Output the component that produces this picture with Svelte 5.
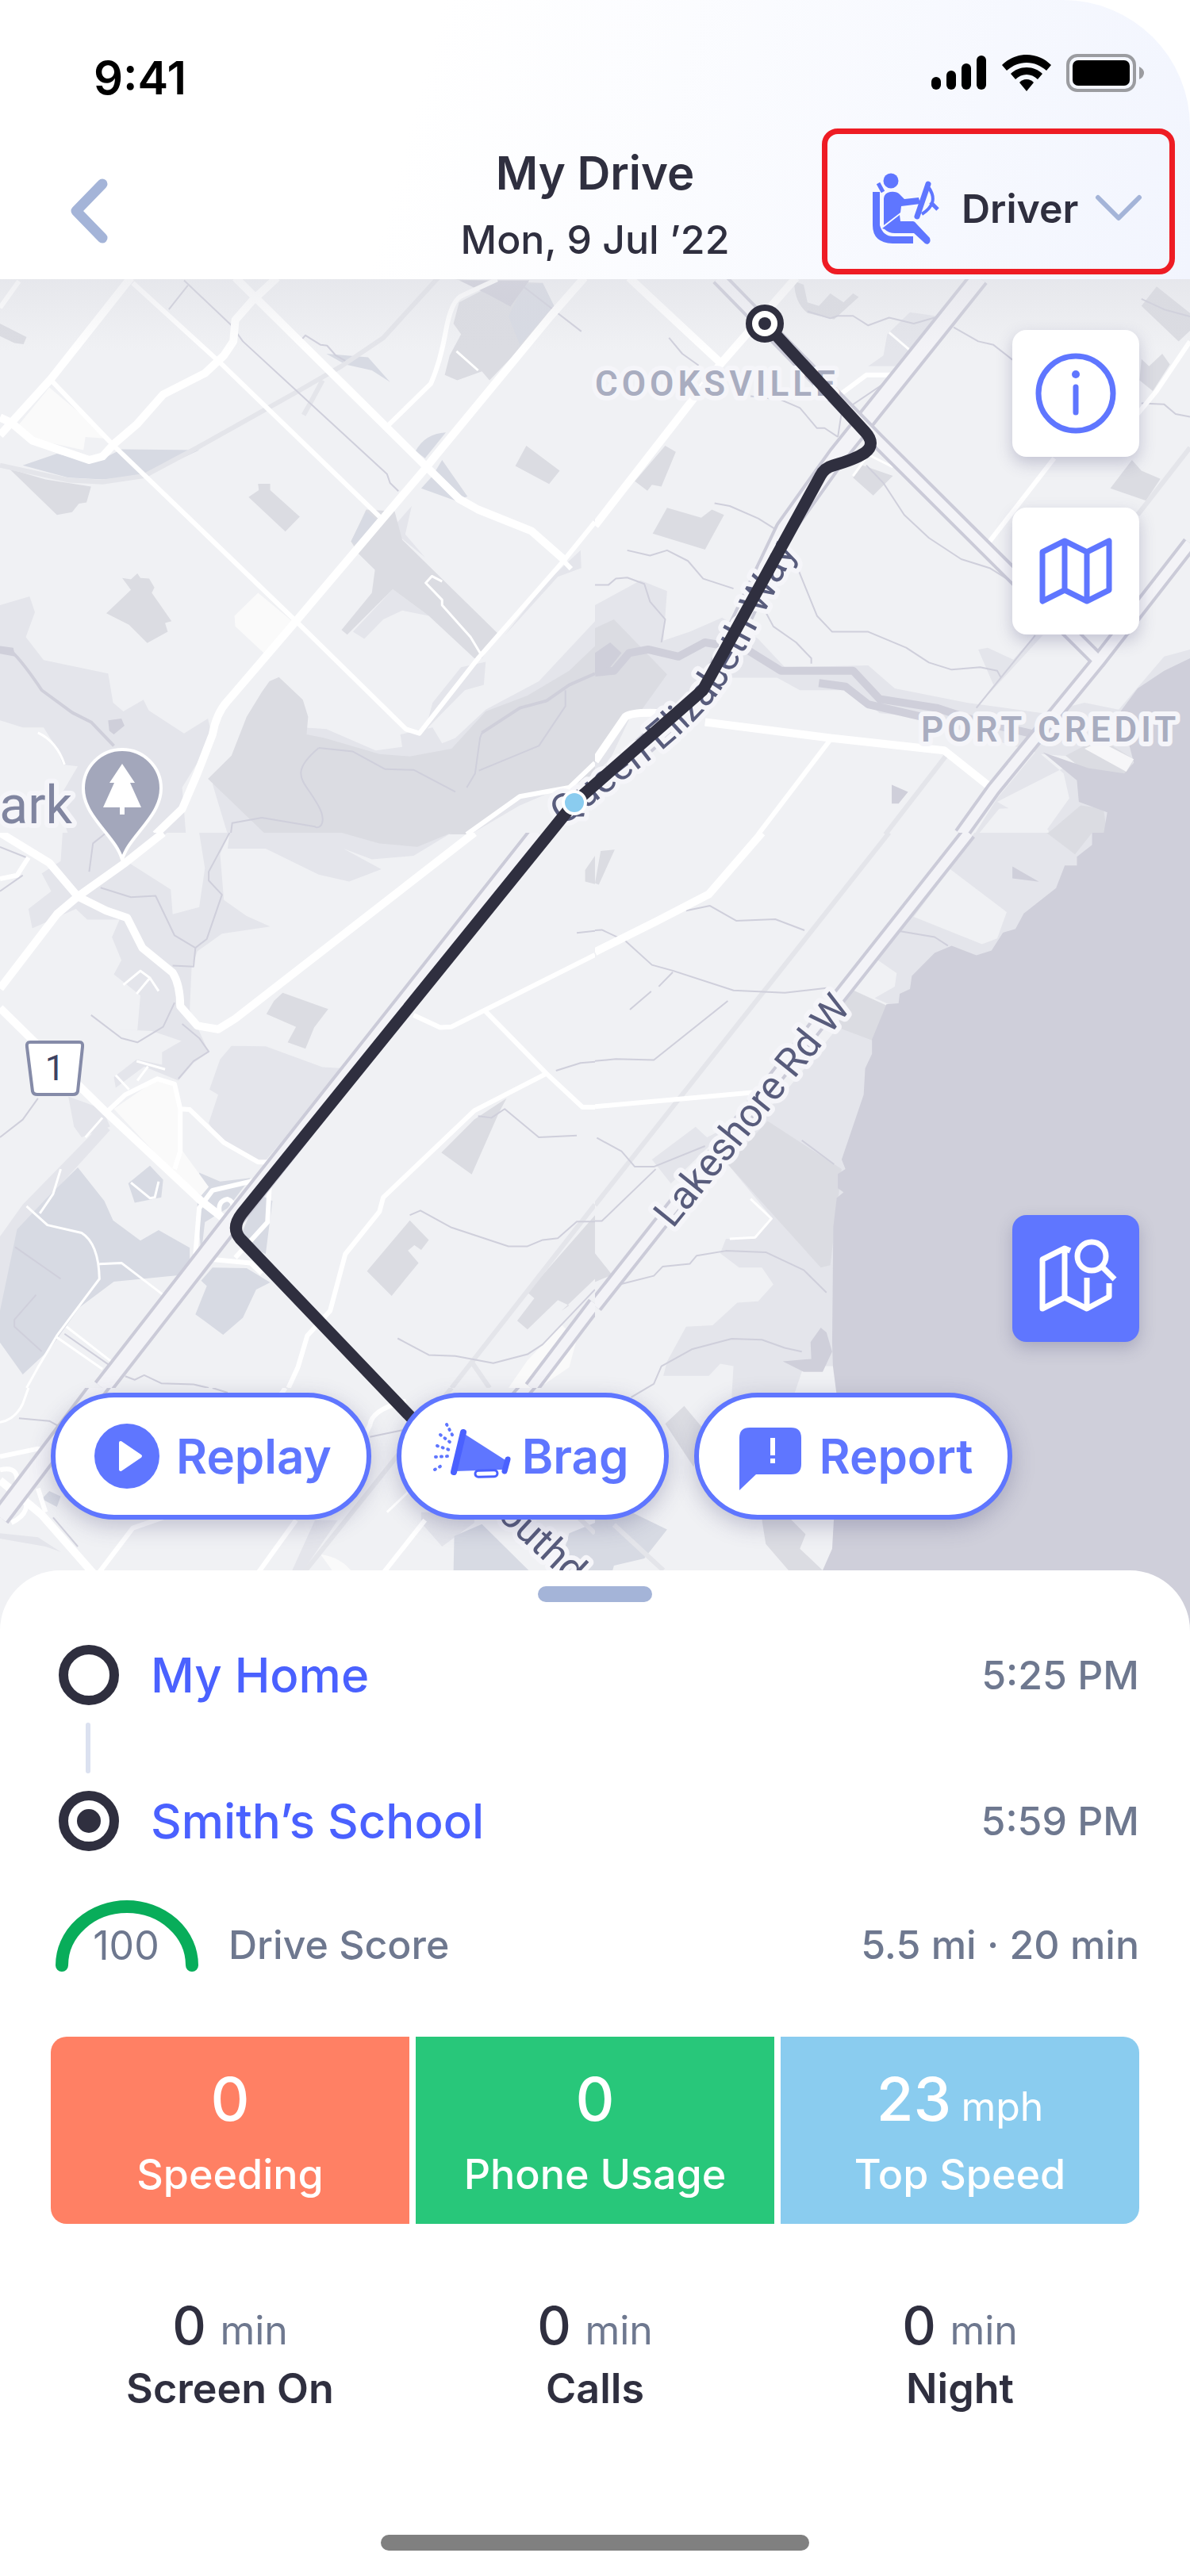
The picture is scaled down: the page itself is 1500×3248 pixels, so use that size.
<script>
  let role = 'Driver';

  const stops = [
    { name: 'My Home', time: '5:25 PM', end: false },
    { name: 'Smith’s School', time: '5:59 PM', end: true }
  ];

  const scores = [
    { value: '0', unit: '', label: 'Speeding', tone: 'coral' },
    { value: '0', unit: '', label: 'Phone Usage', tone: 'green' },
    { value: '23', unit: 'mph', label: 'Top Speed', tone: 'sky' }
  ];

  const stats = [
    { value: '0', unit: 'min', label: 'Screen On' },
    { value: '0', unit: 'min', label: 'Calls' },
    { value: '0', unit: 'min', label: 'Night' }
  ];

  // Map tiles: every layer is one path, drawn bottom to top
  const tiles = [
    {
      x: 0, y: 350, w: 750, h: 702, box: '0 0 1568 1572',
      layers: [
        ['light', 'M0 925L78 900L92 945L68 1015L115 1080L285 1118L298 1200L325 1225L378 1192L392 1222L485 1287L548 1245L560 1300L480 1440L490 1572H0Z M600 1572L560 1430L700 1330L800 1270L860 1275L990 1335L1060 1325L1055 1290L1140 1270L1165 1315L1200 1300L1280 1220L1420 1140L1568 970V1400L1370 1490L1240 1572Z M1215 1100L1280 1085L1275 1150L1225 1165L1165 1230L1120 1280L1140 1200Z M1085 645L1068 725L1120 790L1040 720V700Z M1530 770L1532 820L1470 845L1330 1010L1440 860Z M1060 940L1010 965L960 1020L930 1000L1035 880L1130 955Z'],
        ['land', 'M0 1250L60 1270H115L150 1330L165 1375L205 1380L150 1480L180 1572H0Z'],
        ['dark', 'M25 540L120 570L240 590L228 635L208 638L190 662L150 670Z M655 620L682 600L680 582H712V600L790 675L752 717Z M1387 475L1475 545L1447 583L1358 532Z M322 848L345 852L362 835L370 848L393 850L407 875L400 890L452 970L435 975L442 1000L388 1032L340 980L280 948L345 882Z M965 655L1040 660L1060 740L1312 1005L1270 1075H1250L1130 955L1035 880L915 1008L900 995L980 890L988 825L945 780L925 745Z M0 130L70 168L62 188L38 185L0 165Z M1200 5L1430 15L1460 80L1380 190L1290 290L1270 265L1205 290L1172 275L1185 220L1215 160L1195 130L1210 70L1290 25Z M735 1128L798 1192L812 1240L808 1290L855 1300L1000 1345L1080 1352L1190 1330L1280 1225L1390 1180L1500 1110L1568 1040V1400L1500 1440L1370 1470L1240 1572H700L548 1415L610 1350L650 1240L690 1170L710 1140Z'],
        ['blue', 'M60 530L150 497L235 520L270 512L320 485L525 487L380 560L270 570L180 565Z M1095 490Q1120 440 1175 437L1120 510Z M1140 560L1165 515L1232 618L1200 630L1110 595Z M860 215L970 225L1028 295L980 262L910 245Z M965 660L925 745L940 755L1000 690Z M1380 20L1430 15L1460 80L1370 190L1340 110Z'],
        ['water', 'M285 1250L320 1245L328 1265L300 1290L288 1280Z M0 1040L35 1045L40 1070L0 1062Z M1210 8H1395L1345 82L1290 50Z'],
        ['pale', 'M130 310L290 455L225 450L220 487L85 455L50 415Z M680 890L770 970L695 1060L620 985L618 955Z'],
        ['rail', 'M1155 0L1010 170L900 250L790 318L520 480L380 560L270 577L180 572L0 530 M800 388L820 350L850 290'],
        ['stream', 'M30 1055Q60 1085 110 1165L190 1228L240 1255L300 1322 M1568 1118L1500 1150L1440 1195L1370 1215L1270 1285'],
        ['trail', 'M485 8L610 135L640 180L1020 555L1028 580L1050 603 M445 90L495 22 M795 175L805 163L845 190L862 192L885 220L910 235 M1320 20L1375 22L1532 152 M840 1328C760 1400 800 1420 830 1475C870 1540 840 1560 830 1550L690 1525L612 1540L608 1572 M840 1328L930 1338L1015 1388L1090 1390L1200 1452 M1230 1440L1252 1400L1265 1300L1270 1285 M1490 1165V1210L1420 1322L1262 1392'],
        ['lane', 'M1268 1065L1240 1015L1165 925V910L1122 862L1138 843L1165 858 M1203 208L1260 262 M100 1285Q150 1310 170 1375'],
        ['street', 'M350 15L575 235L1000 675 M135 290L300 475L780 970L1070 1275L1105 1287L1260 1075L1485 800L1568 690 M1025 415L1135 300Q1160 240 1175 150Q1190 60 1220 50L1310 5 M50 10L0 85 M1230 1572L1370 1465L1500 1440L1568 1370 M1485 800L1505 822'],
        ['road', 'M345 0L135 285L0 445 M0 395L30 410L85 460L235 515L270 505L300 470L360 415L430 330L540 270L590 220L615 180L620 120L665 65L730 0 M620 0L1120 530L1210 625L1260 655L1400 715L1485 795 M1540 0L1450 110L1150 500L1120 540L780 970L600 1195Q570 1230 560 1290L520 1400L480 1500L410 1572']
      ]
    },
    {
      x: 750, y: 350, w: 750, h: 702, box: '0 0 1568 1572',
      layers: [
        ['light', 'M0 925L120 855L190 885L180 1025L250 1000L335 960L430 1020L500 1100L720 1095L790 1160L980 1200L1180 1230L1290 1200L1380 1220L1500 1070L1568 1050V1572H1000L1060 1470L1160 1340L1000 1290L850 1240L750 1230L680 1165L540 1165L480 1130L330 1130L200 1225H100L40 1360L0 1400Z M770 160L830 98L908 110L800 250H720L760 220Z M1105 1075L1160 1010H1180L1000 1220Z M1010 1050L1035 1045L1105 1080L1050 1150Z'],
        ['land', 'M1065 1500L1105 1497L1195 1560V1572H1010Z M1290 1355L1175 1345L1235 1400L1250 1470L1190 1560L1060 1480Z'],
        ['dark', 'M0 990L50 965L190 1120L120 1225L80 1240L0 1350Z M152 723L190 650L280 678L308 655L340 670L290 768Z M105 575L185 475L213 492L175 590L150 585L138 602Z M1415 515L1440 545L1490 568L1452 630L1358 595Z M680 565L705 530L785 560L733 615Z M1440 80L1480 25L1568 100V150L1538 180Z M1440 230L1460 250L1495 215L1515 245L1470 320L1435 290Z M525 10L550 20L560 70L590 80L620 45L655 70L680 45L695 55L630 118L560 100Q525 70 525 10Z M1240 1350L1330 1300L1420 1360L1400 1420L1300 1400Z M1280 1490L1340 1500L1350 1572H1190Z'],
        ['water', 'M1568 1075L1500 1110L1430 1160L1385 1225L1420 1370L1395 1400L1300 1385L1180 1340L1270 1420L1275 1480L1350 1510L1340 1572H1568Z M782 1432L825 1452L800 1485H782Z M0 1060L40 1030L70 1060L40 1100L0 1120Z'],
        ['white', 'M1330 1310L1420 1360L1400 1395L1290 1330Z'],
        ['rail', 'M925 1350L765 1572 M1568 480L1430 670'],
        ['river', 'M0 1115L50 1110L90 1060L140 1050L220 1070L290 1030L400 1050L490 1110H680L750 1190L900 1215L1000 1250L1160 1290 M590 1145L660 1155L720 1205L860 1240'],
        ['trail', 'M195 170L230 215L273 248 M560 95L620 115L640 108H680L720 135L775 113L840 130L895 113 M945 140L1010 180L1050 190L1100 232 M315 637L355 645L430 680L475 710 M85 770L145 785L190 770L245 800L285 850L365 878 M0 868H35L55 850L85 847L130 865L145 915L185 965L175 1030 M445 935L470 985L530 1030L570 1075V1090 M530 810L585 955L625 1000H720L820 1045L880 1087L940 1107L1015 1100L1060 1110L1070 1130 M410 335L490 345L540 368L585 425H605L640 450 M715 530L760 580L815 670L880 735L965 795L1040 820L1085 850 M1440 355L1500 358L1530 385L1568 393 M1160 1010L1005 1215 M640 450L650 380L760 300 M1440 60L1500 90L1568 110'],
        ['lane', 'M775 155L830 205 M680 560L720 500L785 535'],
        ['street', 'M640 335L715 275H780 M1210 510L1040 745 M1568 180L1480 320L1430 385 M620 1305L430 1572'],
        ['road', 'M90 0L330 240 M530 0L330 245L0 700 M290 1255L620 1300L920 1335L1055 1450 M0 1365L80 1240Q100 1225 180 1230L240 1240'],
        ['case wide', 'M1013 0L640 500L500 710L300 1160L0 1445'],
        ['fill wide', 'M1013 0L640 500L500 710L300 1160L0 1445'],
        ['case', 'M325 0L740 455L1330 1085 M1568 750L1325 1085L1050 1445L965 1572'],
        ['fill', 'M325 0L740 455L1330 1085 M1568 750L1325 1085L1050 1445L965 1572']
      ]
    },
    {
      x: 0, y: 1050, w: 750, h: 700, box: '0 0 1568 1568',
      layers: [
        ['light', 'M165 0H605L580 60L590 190L650 235L712 265L585 285L520 335L505 380L500 500L550 620L510 650L470 700L380 660L305 720L300 690L360 640L427 655V620L478 588L400 560L300 555L362 558L370 460L300 400L320 360L295 295L315 245H230L200 215L85 270L75 215L135 165L110 115L160 80Z M605 0H1190L1090 65L980 75L905 45L1005 103L920 138L840 118L700 45H600Z M580 640L610 602L700 603L850 662L905 665L700 925H670L580 870L550 820L575 740L552 725Z M180 745L270 780L290 830L215 860L195 830Z M270 820L290 840L70 1100L0 1400V1140L60 1050Z'],
        ['land', 'M440 0H525L540 100L525 210L455 230L450 160L340 85Z'],
        ['dark', 'M900 0H1190L1100 40L1000 30Z M745 452L865 498L828 550L805 610L758 592L780 548L702 512L722 475Z M1315 790L1243 965L1163 903L1250 810L1335 750Z M1080 1095L1130 1150L1110 1178L1092 1165L1075 1180L1103 1215L1032 1308L967 1238Z M1568 1080L1390 1298L1408 1315L1363 1378L1390 1403L1470 1320L1500 1335L1480 1350L1568 1260Z M1568 65L1542 105V138L1568 145Z'],
        ['blue', 'M205 945L275 1040L298 1095L370 1152L418 1122L500 1172V1215L470 1250L300 1268L210 1340L130 1460L60 1530L0 1440V1350L45 1120L120 1035Z M395 940L430 980L425 1030L355 1045L338 990Z M530 1265L560 1228L650 1230L712 1270L675 1290L640 1370L588 1418L515 1360L545 1280Z M525 960L580 985L660 975L600 1060L540 1100L530 1190L520 1050Z M680 1020L718 1040L700 1190L630 1150Z'],
        ['pale', 'M300 780L415 695L465 720L475 890L550 1000L530 1025L440 940Z M1340 1568L1390 1490L1480 1390L1520 1430L1500 1510L1420 1568Z'],
        ['rail', 'M1568 1050L1190 1568 M1240 1490L1290 1568'],
        ['trail', 'M235 110L245 30L280 0 M605 0L550 110V135L585 175L545 300L515 325L460 290L410 178L345 182L265 155 M515 325L510 378L455 375 M240 515L320 580L362 592L430 548L460 480 M480 540L525 580L550 618L510 645L470 695 M0 860L60 810L100 750 M0 165L60 120 M0 40L70 70 M1520 283L1568 277 M1465 672L1530 650L1568 647 M1260 800L1295 805L1330 780L1420 860L1520 855 M1080 1080L1108 1067L1190 1115L1340 1168H1390L1430 1150L1470 1145L1520 1098H1568 M1048 1428L1130 1475L1200 1478L1300 1498L1390 1473L1430 1445L1568 1290 M330 1535L355 1545L380 1532L425 1555L510 1558L550 1568 M40 1170L160 1260 M95 1305L38 1375V1395L110 1465 M170 1415L290 1505'],
        ['lane', 'M70 1055L125 1108L215 1130Q260 1160 262 1260L150 1420L100 1510L70 1568 M262 1218L320 1215L430 1305 M105 1075L140 1020L160 950 M345 988L395 1032L408 1030L418 985 M325 430L370 390L395 410L418 447 M360 455L395 410 M150 1425L270 1515 M175 1395L295 1495 M270 805L225 860 M360 645L435 668 M305 685L340 725 M390 660L362 700'],
        ['street', 'M0 130L45 120L75 70 M280 790L330 740L415 695L460 710L475 780V900L460 950 M475 780L500 782L590 875L680 930H710 M515 1190L525 1060L560 1010L680 980 M710 1000L705 1100L620 1200 M540 1225L560 1205L660 1215L690 1245 M580 1080Q570 1040 600 1035Q630 1045 600 1110 M1090 515L1160 550L1190 548L1568 345 M1280 505L1440 680L1535 775H1568 M1440 680L1250 785L1010 1030L1000 1070L910 1190L870 1350L810 1420L785 1510L760 1568'],
        ['road', 'M0 0L130 85L205 180L280 220L335 240L375 325L455 395Q475 430 475 490L520 545L575 555L620 525L1250 0 M0 440L150 230L205 180L330 85L430 0 M0 495L280 790L530 1040L590 1090'],
        ['case wide', 'M1420 0L620 1085L270 1568'],
        ['fill wide', 'M1420 0L620 1085L270 1568'],
        ['case', 'M1568 1330L1400 1568'],
        ['fill', 'M1568 1330L1400 1568']
      ]
    },
    {
      x: 0, y: 1750, w: 750, h: 310, box: '0 90 1568 930',
      layers: [
        ['light', 'M0 640L100 655L160 710L120 690L0 660Z M830 590H890L800 780H770Z M1110 600L1165 690L1250 600V560H1110Z'],
        ['blue', 'M1195 790L1197 650L1270 605L1400 790Z M1470 790L1500 640L1568 600V790Z M130 480L160 500L150 540L110 510Z'],
        ['pale', 'M845 720Q900 730 930 790H880Z'],
        ['rail', 'M1190 90L800 790 M1568 640L1510 560'],
        ['trail', 'M50 205L130 215L155 235 M560 90L600 108 M975 275L1060 250 M140 580L205 690'],
        ['lane', 'M75 90L60 150Q40 210 0 220 M1020 560L1100 450'],
        ['street', 'M0 350L100 320L140 330 M0 400Q60 380 40 480Q20 560 0 580 M30 600Q90 560 60 480L100 400 M260 790L350 620L430 580 M780 590L680 790 M1120 590L1010 790 M752 90L740 115 M1070 140Q980 170 975 230L900 450 M120 560L100 470'],
        ['road', 'M0 440L60 510L110 570L245 790'],
        ['case wide', 'M290 30L0 580'],
        ['fill wide', 'M290 30L0 580'],
        ['case', 'M1405 60L1260 300'],
        ['fill', 'M1405 60L1260 300']
      ]
    },
    {
      x: 750, y: 1050, w: 750, h: 1010, box: '0 0 1568 1667',
      layers: [
        ['light', 'M935 75L1000 0H1400V300L900 400L740 345L690 318L800 190Z M640 405L760 400L740 545L680 680L660 1110H550L520 1180L360 1175L365 1110L330 1105L300 1130H180L190 1100L240 1028L310 1025L375 978L430 975L470 940L440 905H380L330 875L345 845H420L465 800L350 690L280 640L480 560Z M150 680L265 612L310 645L200 730Z'],
        ['land', 'M935 75L1085 165L1060 220L1020 232L840 175Z M740 262L795 292L790 320L735 345L688 318Z'],
        ['dark', 'M1190 0H1310L1265 45Z M660 320L775 362L740 435L640 405Z M455 600L650 700L620 900L595 905L350 690Z M0 875L45 920L0 935Z M235 1193L285 1240L260 1320L185 1230Z M440 1430L480 1400L555 1460L540 1490L600 1535H510L450 1480Z M15 38L52 35L10 108L0 105Z'],
        ['blue', 'M0 1420L60 1400L190 1450L130 1510L50 1525L0 1667Z'],
        ['water', 'M1568 0H1310V25L1270 50V68H1238L1215 115L1130 168L1108 200L1075 208L1045 245L1005 255L940 235L895 250L835 298L830 325L803 335L800 355L768 357L730 430V460L712 490L708 545L650 680L660 700L640 710V740L655 748L637 760L628 820L625 1060L627 1110L636 1165L630 1420L625 1490L600 1535V1667H1568Z M495 1100L570 1095L568 1060L595 1030L610 1040L625 1080L600 1122H550Z M1100 70L1170 102L1100 95Z'],
        ['rail', 'M775 0L0 775 M50 1440L180 1535'],
        ['trail', 'M240 162L303 152L372 183L475 180L552 203 M0 203L18 202L80 225L150 275L205 287L365 328L500 333L610 323 M350 350L155 473L55 471L0 475 M5 635L70 663L105 695H155L290 652 M0 808H18L160 700 M65 940L155 922L178 903L250 897L268 880L345 870L450 873L550 910L610 957 M95 1175L155 1147L175 1110L255 1075L360 1053L440 1055L500 1072L545 1080 M805 205L895 217L930 235 M545 640L630 690 M205 290L168 320 M148 330L92 368'],
        ['lane', 'M410 762L465 803L422 842L355 845'],
        ['street', 'M0 570L420 540'],
        ['road', 'M440 0L300 128L160 185L0 248'],
        ['case', 'M985 0L0 985'],
        ['fill', 'M985 0L0 985']
      ]
    }
  ];
</script>

<div class="phone">
  <header class="top">
    <div class="status">
      <span class="clock">9:41</span>
      <div class="signals">
        <svg width="70" height="46" viewBox="0 0 70 46" aria-hidden="true">
          <rect x="0" y="28" width="12" height="16" rx="6" />
          <rect x="19" y="20" width="12" height="24" rx="6" />
          <rect x="38" y="11" width="12" height="33" rx="6" />
          <rect x="57" y="1" width="12" height="43" rx="6" />
        </svg>
        <svg width="62" height="46" viewBox="0 0 62 46" aria-hidden="true">
          <path d="M31 0C19 0 8 5 0 13L6 20C13 14 21 10 31 10S49 14 56 20L62 13C54 5 43 0 31 0Z" />
          <path d="M31 16C23 16 16 19 11 24L17 31C21 27 26 25 31 25S41 27 45 31L51 24C46 19 39 16 31 16Z" />
          <path d="M31 31C27 31 24 33 22 35L31 46L40 35C38 33 35 31 31 31Z" />
        </svg>
        <svg width="98" height="48" viewBox="0 0 98 48" aria-hidden="true">
          <rect x="2" y="2" width="84" height="44" rx="12" fill="none" stroke="#9b9ca0" stroke-width="4" />
          <rect x="8" y="8" width="72" height="32" rx="7" />
          <path d="M92 16Q98 19 98 24T92 32Z" fill="#9b9ca0" />
        </svg>
      </div>
    </div>

    <div class="nav">
      <button type="button" class="back" aria-label="Back">
        <svg width="48" height="84" viewBox="0 0 48 84"><path d="M41 8L8 42L41 76" /></svg>
      </button>
      <div class="titles">
        <h1>My Drive</h1>
        <p>Mon, 9 Jul ’22</p>
      </div>
      <label class="role">
        <svg class="driver" width="84" height="90" viewBox="0 0 84 90" aria-hidden="true">
          <circle cx="23" cy="10" r="9.5" />
          <path d="M7 13L13 24" class="line" stroke-width="5" />
          <path d="M0 24H9V66Q13 80 26 80H51V89H25Q0 88 0 66Z" />
          <path d="M14 32Q15 25 22 24Q30 23 34 27L40 33L58 31L60 39L36 42L35 50L14 66Z" />
          <path d="M12 70L34 53L35 61H51Q53 61 55 64L72 82Q74 88 69 90Q66 90 64 87L52 76H28Q20 76 15 71Z" />
          <path d="M70 14L56 55" class="line" stroke-width="7" stroke-linecap="round" />
          <path d="M71 19Q84 38 62 52" class="line" stroke-width="4" />
          <path d="M73 37L82 46" class="line" stroke-width="5" />
        </svg>
        <select bind:value={role} aria-label="Role">
          <option>Driver</option>
          <option>Other</option>
        </select>
        <svg class="chevron" width="60" height="36" viewBox="0 0 60 36" aria-hidden="true">
          <path d="M4 4L30 30L56 4" />
        </svg>
      </label>
    </div>
  </header>

  <section class="map">
    <svg class="canvas" viewBox="0 352 1500 1704" preserveAspectRatio="xMidYMin slice" role="img" aria-label="Drive route">
      <defs>
        <linearGradient id="shade" x1="0" y1="0" x2="0" y2="1">
          <stop offset="0" stop-color="#d8d9e0" stop-opacity=".4" />
          <stop offset="1" stop-color="#d8d9e0" stop-opacity="0" />
        </linearGradient>
        <path id="qew" d="M710 1042L800 973Q882 912 914 862Q942 820 1030 640" />
      </defs>
      <rect x="0" y="352" width="1500" height="1704" class="land" />
      {#each tiles as tile}
        <svg x={tile.x} y={tile.y} width={tile.w} height={tile.h} viewBox={tile.box} preserveAspectRatio="none">
          {#each tile.layers as [kind, d]}
            <path class={kind} {d} />
          {/each}
        </svg>
      {/each}
      <rect x="0" y="352" width="1500" height="90" fill="url(#shade)" />

      <text class="place" x="750" y="499">COOKSVILLE</text>
      <text class="place" x="1161" y="935">PORT CREDIT</text>
      <text class="street-name" x="0" y="0" transform="translate(848 1550) rotate(-51)">Lakeshore Rd W</text>
      <text class="street-name" x="0" y="0" transform="translate(604 1892) rotate(43)">Southdown Rd</text>
      <text class="street-name"><textPath href="#qew">Queen Elizabeth Way</textPath></text>

      <text class="park" x="91" y="1038" text-anchor="end">ark</text>
      <path d="M154 1084C146 1054 105 1030 105 994A49 49 0 0 1 203 994C203 1030 162 1054 154 1084Z" class="pin" />
      <path d="M154 963L170 987H164L178 1018H157V1027H151V1018H130L144 987H138Z" fill="#fff" />

      <path d="M38 1314H100Q105 1314 104 1320L98 1376Q97 1380 92 1380H47Q42 1380 41 1376L34 1320Q33 1314 38 1314Z" class="shield" />
      <text class="shield-no" x="69" y="1362" text-anchor="middle">1</text>

      <path class="route" d="M964 407L1090 544Q1105 560 1090 571Q1078 579 1050 587Q1039 590 1034 600L886 870L724 1012L305 1530Q291 1548 303 1562L540 1810" />
      <circle cx="964" cy="408" r="20" fill="#fff" stroke="#2f2f3f" stroke-width="8" />
      <circle cx="964" cy="408" r="8" fill="#2f2f3f" />
      <circle cx="724" cy="1012" r="14" fill="#8accef" stroke="#fff" stroke-width="4" />
    </svg>

    <div class="overlay">
      <button type="button" class="tool" aria-label="Information">
        <svg viewBox="0 0 160 160">
          <circle cx="80" cy="80" r="47" />
          <path d="M80 72V104" />
          <circle cx="80" cy="56" r="5" class="solid" />
        </svg>
      </button>
      <button type="button" class="tool" aria-label="Map type">
        <svg viewBox="0 0 160 160">
          <path d="M38 56L66 42L94 56L122 42V104L94 118L66 104L38 118Z M66 42V104 M94 56V118" />
        </svg>
      </button>
      <button type="button" class="tool find" aria-label="Search the map">
        <svg viewBox="0 0 160 160">
          <path d="M73 45L66 42L38 56V118L66 104L94 118L122 103V86 M66 42V104 M94 79V118" class="butt" />
          <circle cx="100" cy="52" r="18" />
          <path d="M113 65L129 81" class="butt" />
        </svg>
      </button>
      <div class="actions">
        <button type="button">
          <svg viewBox="0 0 104 104" aria-hidden="true">
            <circle cx="54" cy="52" r="41" fill="#5f76ff" />
            <path d="M46 35L71 52L46 69Z" fill="#fff" stroke="#fff" stroke-width="4" stroke-linejoin="round" />
          </svg>
          Replay
        </button>
        <button type="button">
          <svg viewBox="0 0 104 104" aria-hidden="true">
            <path d="M45 25L95 57L92 69L32 71Z" fill="#5f76ff" />
            <g fill="none" stroke="#4a61ff" stroke-linecap="round">
              <path d="M42 22L30 72" stroke-width="8" />
              <path d="M98 56L94 71" stroke-width="7" />
              <rect x="57" y="70" width="28" height="8" rx="4" stroke-width="3" transform="rotate(-2 71 74)" />
              <path d="M21 12L29 27 M13 25L26 35 M9 39L24 44 M7 53L23 52 M6 69L18 62" stroke="#5f76ff" stroke-width="4" stroke-dasharray="1 6" />
            </g>
          </svg>
          Brag
        </button>
        <button type="button">
          <svg viewBox="0 0 104 104" aria-hidden="true">
            <path d="M28 16H80Q93 16 93 29V62Q93 75 80 75H36L15 95V29Q15 16 28 16Z" fill="#5f76ff" />
            <rect x="54" y="29" width="6" height="22" fill="#fff" />
            <rect x="54" y="55" width="6" height="6" fill="#fff" />
          </svg>
          Report
        </button>
      </div>
    </div>
  </section>

  <section class="sheet">
    <div class="handle"></div>

    <ol class="stops">
      {#each stops as stop}
        <li>
          <svg width="76" height="76" viewBox="0 0 76 76" aria-hidden="true">
            <circle cx="38" cy="38" r="32" fill="none" stroke="#2f2f3f" stroke-width="12" />
            {#if stop.end}<circle cx="38" cy="38" r="15" fill="#2f2f3f" />{/if}
          </svg>
          <a href="#stop">{stop.name}</a>
          <time>{stop.time}</time>
        </li>
      {/each}
    </ol>

    <div class="summary">
      <svg width="180" height="92" viewBox="0 0 180 92">
        <path d="M8 82A82 74 0 0 1 172 82" fill="none" stroke="#08ad5a" stroke-width="16" stroke-linecap="round" />
        <text x="89" y="75" text-anchor="middle">100</text>
      </svg>
      <span>Drive Score</span>
      <span class="trip">5.5 mi · 20 min</span>
    </div>

    <div class="scores">
      {#each scores as score}
        <div class="score {score.tone}">
          <p class="value">{score.value}{#if score.unit}&nbsp;<small>{score.unit}</small>{/if}</p>
          <p class="label">{score.label}</p>
        </div>
      {/each}
    </div>

    <div class="stats">
      {#each stats as stat}
        <div class="stat">
          <p class="value">{stat.value} <small>{stat.unit}</small></p>
          <p class="label">{stat.label}</p>
        </div>
      {/each}
    </div>

    <div class="home-bar"></div>
  </section>
</div>

<style>
  :global(body) {
    margin: 0;
    background: #fff;
  }

  .phone {
    font-family: Inter, 'Noto Sans', sans-serif;
    color: #2f2f3f;
  }

  h1, p, ol {
    margin: 0;
    padding: 0;
  }

  button {
    font: inherit;
    padding: 0;
    border: 0;
    background: none;
    cursor: pointer;
  }

  .top {
    padding-bottom: 6px;
    border-top-right-radius: 160px;
    background: linear-gradient(105deg, #fff 35%, #f2f5fe 100%);
  }

  .status {
    display: flex;
    justify-content: space-between;
    align-items: center;
    height: 162px;
    box-sizing: border-box;
    padding: 22px 58px 0 118px;
  }

  .clock {
    font-size: 58px;
    font-weight: 600;
    color: #000;
    padding-top: 12px;
  }

  .signals {
    display: flex;
    align-items: center;
    gap: 19px;
  }

  .nav {
    display: grid;
    grid-template-columns: 1fr auto 1fr;
    align-items: center;
    height: 184px;
  }

  .back {
    justify-self: start;
    margin-left: 88px;
    padding-top: 24px;
  }

  .back svg {
    display: block;
  }

  .back path {
    fill: none;
    stroke: #a4b4d8;
    stroke-width: 13;
    stroke-linecap: round;
    stroke-linejoin: round;
  }

  .titles {
    padding-top: 12px;
    text-align: center;
  }

  h1 {
    font-size: 58px;
    font-weight: 600;
    line-height: 84px;
  }

  .titles p {
    font-size: 50px;
    font-weight: 500;
    line-height: 84px;
  }

  .role {
    justify-self: end;
    display: flex;
    align-items: center;
    height: 184px;
    box-sizing: border-box;
    margin-right: 19px;
    padding: 18px 34px 0 57px;
    border: 7px solid #ee1c24;
    border-radius: 20px;
  }

  .driver {
    fill: #5f76ff;
    margin-right: 28px;
  }

  .driver .line {
    fill: none;
    stroke: #5f76ff;
  }

  select {
    appearance: none;
    width: 168px;
    padding: 0;
    border: 0;
    background: none;
    color: inherit;
    font: 600 50px Inter, 'Noto Sans', sans-serif;
  }

  .chevron path {
    fill: none;
    stroke: #a4b4d8;
    stroke-width: 6;
    stroke-linecap: round;
    stroke-linejoin: round;
  }

  .map {
    position: relative;
    aspect-ratio: 1500 / 1704;
  }

  .canvas {
    display: block;
    width: 100%;
    height: 100%;
  }

  .canvas path {
    vector-effect: non-scaling-stroke;
    stroke-linejoin: round;
  }

  .land { fill: #f0f1f4; }
  .light { fill: #e4e5eb; }
  .dark { fill: #dbdce2; }
  .blue { fill: #d7dae3; }
  .water { fill: #cfcfda; }
  .pale { fill: #fafafa; }
  .white { fill: #f6f6f8; }

  .rail, .stream, .river, .trail, .lane, .street, .road, .case, .fill {
    fill: none;
  }

  .rail {
    stroke: #e4e5ea;
    stroke-width: 6px;
  }

  .stream {
    stroke: #cfcfda;
    stroke-width: 4px;
  }

  .river {
    stroke: #cfcfda;
    stroke-width: 10px;
  }

  .trail {
    stroke: #cfcfdb;
    stroke-width: 2px;
  }

  .lane {
    stroke: #fff;
    stroke-width: 3px;
  }

  .street {
    stroke: #fff;
    stroke-width: 6px;
  }

  .road {
    stroke: #fff;
    stroke-width: 10px;
  }

  .case {
    stroke: #cbcbd8;
    stroke-width: 20px;
  }

  .fill {
    stroke: #f3f3f7;
    stroke-width: 12px;
  }

  .case.wide {
    stroke-width: 26px;
  }

  .fill.wide {
    stroke-width: 18px;
  }

  .canvas text {
    font-family: Roboto, sans-serif;
    paint-order: stroke;
    stroke: #f5f5f9;
    stroke-width: 12px;
    stroke-linejoin: round;
  }

  .place {
    font-size: 44px;
    font-weight: 600;
    letter-spacing: 5px;
    fill: #a9adc0;
  }

  .street-name {
    font-size: 50px;
    fill: #585c7c;
  }

  .park {
    font-size: 66px;
    fill: #8085a0;
  }

  .pin {
    fill: #a3a7bb;
    stroke: #fff;
    stroke-width: 4px;
  }

  .shield {
    fill: #fff;
    stroke: #858ba8;
    stroke-width: 4px;
  }

  .canvas .shield-no {
    font-size: 44px;
    fill: #3d4160;
    stroke: none;
  }

  .route {
    fill: none;
    stroke: #2f2f3f;
    stroke-width: 15px;
  }

  .overlay {
    position: absolute;
    inset: 64px 64px 140px;
    display: flex;
    flex-direction: column;
    align-items: flex-end;
    gap: 64px;
  }

  .tool {
    width: 160px;
    height: 160px;
    border-radius: 18px;
    background: #fff;
    box-shadow: 0 8px 20px rgba(60, 60, 110, 0.25);
  }

  .tool svg {
    display: block;
    fill: none;
    stroke: #5f76ff;
    stroke-width: 7;
    stroke-linecap: round;
    stroke-linejoin: round;
  }

  .tool .solid {
    fill: #5f76ff;
    stroke: none;
  }

  .tool .butt {
    stroke-linecap: butt;
  }

  .find {
    margin-top: auto;
    background: #5f76ff;
  }

  .find svg {
    stroke: #fff;
  }

  .actions {
    align-self: flex-start;
    display: flex;
    gap: 32px;
  }

  .actions button {
    display: flex;
    align-items: center;
    gap: 12px;
    height: 160px;
    padding: 0 44px 0 36px;
    border: 6px solid #5f76ff;
    border-radius: 80px;
    background: #fff;
    color: #5f76ff;
    font-size: 60px;
    font-weight: 600;
    box-shadow: 0 8px 28px rgba(60, 60, 110, 0.28);
  }

  .actions svg {
    width: 104px;
    height: 104px;
  }

  .sheet {
    position: relative;
    margin-top: -76px;
    padding: 20px 64px 32px;
    border-radius: 76px 76px 0 0;
    background: #fff;
  }

  .handle {
    width: 144px;
    height: 20px;
    margin: 0 auto 54px;
    border-radius: 10px;
    background: #a4b4d8;
  }

  .stops {
    list-style: none;
    padding-left: 10px;
  }

  .stops li {
    display: flex;
    align-items: center;
    height: 76px;
  }

  .stops li + li {
    position: relative;
    margin-top: 108px;
  }

  /* connector between two stops */
  .stops li + li::before {
    content: '';
    position: absolute;
    left: 34px;
    top: -86px;
    width: 6px;
    height: 64px;
    border-radius: 3px;
    background: #dbe1f0;
  }

  .stops a {
    margin-left: 40px;
    color: #4a61ff;
    font-size: 60px;
    font-weight: 500;
    text-decoration: none;
  }

  time, .trip {
    margin-left: auto;
  }

  time, .summary {
    color: #6e788f;
    font-size: 50px;
    font-weight: 500;
  }

  .summary {
    display: flex;
    align-items: flex-end;
    margin-top: 62px;
    padding-left: 6px;
    line-height: 72px;
  }

  .summary svg {
    margin-right: 38px;
  }

  .summary text {
    fill: #6e788f;
    font-size: 50px;
    font-weight: 400;
  }

  .scores {
    display: grid;
    grid-template-columns: repeat(3, 1fr);
    gap: 8px;
    margin-top: 80px;
    border-radius: 20px;
    overflow: hidden;
  }

  .score {
    padding: 30px 0 14px;
    color: #fff;
    text-align: center;
    line-height: 96px;
  }

  .coral { background: #ff8064; }
  .green { background: #28c77a; }
  .sky { background: #8accef; }

  .score .value {
    font-size: 76px;
    font-weight: 500;
  }

  .score .label {
    font-size: 52px;
    font-weight: 500;
  }

  small {
    font-size: 50px;
    font-weight: 400;
    line-height: 1;
  }

  .score small {
    margin-left: -8px;
  }

  .stats {
    display: grid;
    grid-template-columns: repeat(3, 1fr);
    gap: 8px;
    margin-top: 88px;
    text-align: center;
    line-height: 80px;
  }

  .stat .value {
    font-size: 66px;
    font-weight: 500;
  }

  .stat small {
    color: #6e788f;
  }

  .stat .label {
    font-size: 52px;
    font-weight: 600;
  }

  .home-bar {
    width: 540px;
    height: 20px;
    margin: 144px auto 0;
    border-radius: 10px;
    background: #808080;
  }
</style>
